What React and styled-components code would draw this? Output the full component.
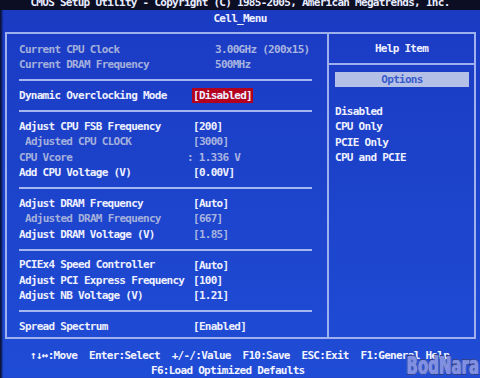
import React from 'react';
import styled, { createGlobalStyle } from 'styled-components';

const GlobalStyle = createGlobalStyle`
  html, body {
    margin: 0;
    padding: 0;
    background: #1c40c8;
  }
`;

const rows = [
  { label: 'Current CPU Clock', value: '3.00GHz (200x15)', dim: true, shift: 22 },
  { label: 'Current DRAM Frequency', value: '500MHz', dim: true, shift: 22 },
  { sep: true },
  { label: 'Dynamic Overclocking Mode', value: '[Disabled]', selected: true },
  { sep: true },
  { label: 'Adjust CPU FSB Frequency', value: '[200]' },
  { label: 'Adjusted CPU CLOCK', value: '[3000]', dim: true, indent: true },
  { label: 'CPU Vcore', value: ': 1.336 V', dim: true, shift: -6 },
  { label: 'Add CPU Voltage (V)', value: '[0.00V]' },
  { sep: true },
  { label: 'Adjust DRAM Frequency', value: '[Auto]' },
  { label: 'Adjusted DRAM Frequency', value: '[667]', dim: true, indent: true },
  { label: 'Adjust DRAM Voltage (V)', value: '[1.85]', valueDim: true },
  { sep: true },
  { label: 'PCIEx4 Speed Controller', value: '[Auto]' },
  { label: 'Adjust PCI Express Frequency', value: '[100]' },
  { label: 'Adjust NB Voltage (V)', value: '[1.21]' },
  { sep: true },
  { label: 'Spread Spectrum', value: '[Enabled]' },
];

const helpOptions = ['Disabled', 'CPU Only', 'PCIE Only', 'CPU and PCIE'];

const App = () => {
  return (
    <>
      <GlobalStyle />
      <Screen>
        <TopBar>
          <TopText>CMOS Setup Utility - Copyright (C) 1985-2005, American Megatrends, Inc.</TopText>
        </TopBar>
        <Title>Cell_Menu</Title>

        <Frame>
          <MainPanel>
            {rows.map((row, i) =>
              row.sep ? (
                <Separator key={i} />
              ) : (
                <Row key={i}>
                  <Label $dim={row.dim} $indent={row.indent}>{row.label}</Label>
                  <Value
                    $dim={row.dim || row.valueDim}
                    $selected={row.selected}
                    style={row.shift ? { marginLeft: row.shift } : undefined}
                  >
                    {row.value}
                  </Value>
                </Row>
              )
            )}
          </MainPanel>

          <HelpPanel>
            <HelpHeader>Help Item</HelpHeader>
            <OptionsBar>Options</OptionsBar>
            <HelpList>
              {helpOptions.map((opt) => (
                <HelpLine key={opt}>{opt}</HelpLine>
              ))}
            </HelpList>
          </HelpPanel>
        </Frame>

        <Footer>
          <FooterLine $pad={30}>{'↑↓↔:Move  Enter:Select  +/-/:Value  F10:Save  ESC:Exit  F1:General Help'}</FooterLine>
          <FooterLine $pad={151}>F6:Load Optimized Defaults</FooterLine>
        </Footer>

        <Watermark>BodNara</Watermark>
      </Screen>
    </>
  );
};

export default App;

const biosFont = `
  font-family: 'DejaVu Sans Mono', 'Liberation Mono', monospace;
  font-weight: bold;
  font-size: 11px;
  letter-spacing: -0.72px;
`;

const Screen = styled.div`
  position: relative;
  width: 480px;
  height: 378px;
  overflow: hidden;

  display: flex;
  flex-direction: column;

  background: linear-gradient(180deg, #1b3ac2 0%, #1d44cc 55%, #1f4cd6 100%);
  box-shadow: inset 3px 0 2px -1px #0a1238;

  color: #eef0ff;
  ${biosFont}
`;

const TopBar = styled.div`
  height: 10px;
  overflow: hidden;

  background: #0c0e24;
  text-align: center;
`;

const TopText = styled.div`
  margin-top: -2px;
  line-height: 10px;
  white-space: pre;
  color: #e8ecff;
`;

const Title = styled.div`
  height: 22px;
  line-height: 17px;
  text-align: center;
`;

const Frame = styled.div`
  display: grid;
  grid-template-columns: 1fr 147px;

  height: 304px;
  margin: 0 4px 0 5px;

  border: 2px solid #9eb0ee;
`;

const MainPanel = styled.div`
  display: flex;
  flex-direction: column;

  padding: 8px 15px 0 12px;
`;

const Row = styled.div`
  display: flex;
  align-items: center;

  height: 15.4px;
  line-height: 15.4px;
  white-space: pre;
`;

const Label = styled.span`
  width: 174px;
  flex-shrink: 0;

  padding-left: ${(p) => (p.$indent ? '6px' : '0')};
  box-sizing: border-box;

  color: ${(p) => (p.$dim ? '#a4b0dc' : '#eef0ff')};
`;

const Value = styled.span`
  display: inline-block;
  height: 15px;
  line-height: 15px;

  padding: 0 ${(p) => (p.$selected ? '1px' : '0')};
  margin-left: ${(p) => (p.$selected ? '-1px' : '0')};

  background: ${(p) => (p.$selected ? '#b3001e' : 'transparent')};
  color: ${(p) => (p.$dim ? '#a8b4e0' : '#eef0ff')};
`;

const Separator = styled.div`
  display: flex;
  align-items: center;

  height: 15.4px;

  &::after {
    content: '';
    flex: 1;
    height: 2px;
    background: #a6b6f0;
  }
`;

const HelpPanel = styled.div`
  display: flex;
  flex-direction: column;

  border-left: 2px solid #9eb0ee;
`;

const HelpHeader = styled.div`
  display: flex;
  align-items: center;
  justify-content: center;

  height: 29px;
  border-bottom: 2px solid #9eb0ee;
`;

const OptionsBar = styled.div`
  height: 15px;
  line-height: 15px;
  margin: 7px 5px 0 6px;

  background: #b4c0e6;
  color: #3a5acc;
  text-align: center;
`;

const HelpList = styled.div`
  display: flex;
  flex-direction: column;

  margin-top: 17px;
  padding-left: 6px;
`;

const HelpLine = styled.div`
  height: 15.4px;
  line-height: 15.4px;
  white-space: pre;
`;

const Footer = styled.div`
  display: flex;
  flex-direction: column;

  padding-top: 9px;
`;

const FooterLine = styled.div`
  height: 15px;
  line-height: 15px;
  padding-left: ${(p) => p.$pad}px;
  white-space: pre;
  color: #f2f4ff;
`;

const Watermark = styled.div`
  position: absolute;
  right: 1px;
  bottom: 1px;

  font-family: 'DejaVu Sans', sans-serif;
  font-weight: bold;
  font-size: 25px;
  letter-spacing: 0;
  line-height: 22px;

  color: #7f90e4;
  -webkit-text-stroke: 1.8px #18226e;
  paint-order: stroke fill;
  text-shadow: 0 0 2px rgba(220, 230, 255, 0.9);

  transform: scaleX(0.6);
  transform-origin: right center;
`;
